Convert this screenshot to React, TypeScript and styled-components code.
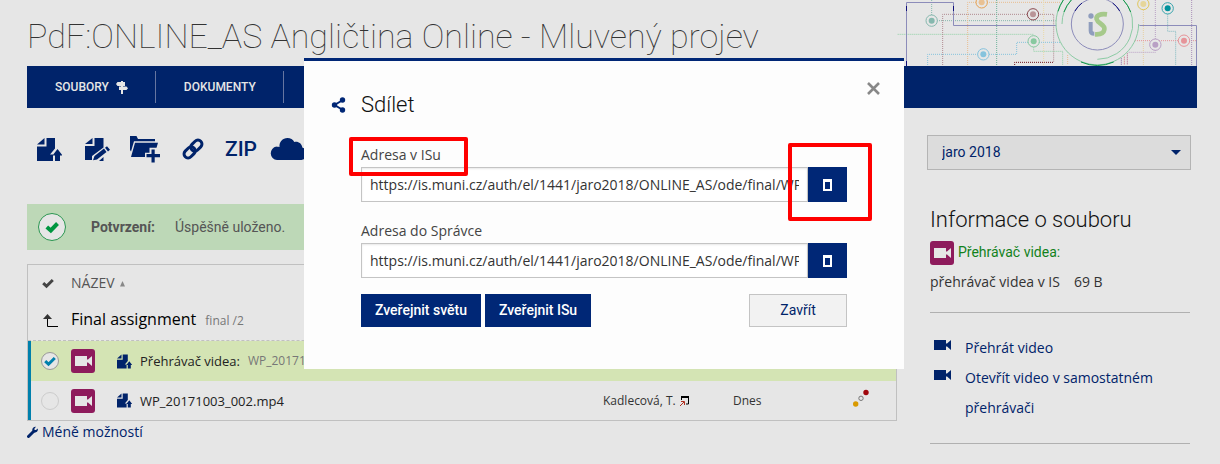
import React, { useState } from "react";
import styled, { createGlobalStyle } from "styled-components";

const navy = "#00236a";
const blue = "#002776";
const sans = `"Open Sans", "Noto Sans", sans-serif`;
const roboto = `Roboto, "Open Sans", sans-serif`;

const GlobalStyle = createGlobalStyle`
  *, *::before, *::after { box-sizing: border-box; }
  body { margin: 0; background: #e6e6e6; color: #333; font: 14px/20px ${sans}; }
  button, input, select { font: inherit; color: inherit; margin: 0; }
  button { cursor: pointer; }
  a { color: ${navy}; text-decoration: none; }
`;

const Page = styled.div`
  padding: 0 23px 20px 27px;
`;

const Header = styled.header`
  display: flex;
  justify-content: space-between;
  align-items: flex-start;
  height: 66px;
  overflow: hidden;
`;

const PageTitle = styled.h1`
  margin: 16px 0 0;
  font: 100 34px/40px ${roboto};
  white-space: nowrap;
`;

const Circuit = styled.svg`
  flex: none;
  width: 300px;
  height: 66px;
`;

const Nav = styled.nav`
  display: flex;
  align-items: center;
  height: 42px;
  background: ${navy};
`;

const NavLink = styled.a`
  display: flex;
  align-items: center;
  gap: 7px;
  height: 32px;
  padding: 0 27px 0 28px;
  border-right: 1px solid #6675a0;
  color: #e6e6e6;
  font: 500 12px/32px ${roboto};
`;

const Columns = styled.div`
  display: grid;
  grid-template-columns: minmax(0, 1fr) 264px;
  gap: 30px;
  padding: 27px 6px 0 0;
`;

const Toolbar = styled.div`
  display: flex;
  gap: 4px;
  height: 28px;
  margin-bottom: 41px;
`;

const ToolButton = styled.button`
  display: flex;
  align-items: center;
  justify-content: center;
  width: 44px;
  padding: 0;
  border: 0;
  background: none;
  color: ${navy};
  font: 500 21px/28px ${roboto};
`;

const Alert = styled.div`
  display: flex;
  align-items: center;
  height: 46px;
  padding-left: 11px;
  margin-bottom: 14px;
  background: #bdd8b7;
  color: #555;
  font: 400 14px/20px ${roboto};

  svg { margin-right: 25px; }
  strong { margin-right: 20px; font-weight: 700; }
`;

const FileTable = styled.table`
  width: 100%;
  table-layout: fixed;
  border: 1px solid #c0c0c0;
  border-spacing: 0;
`;

const Col = styled.col<{ $w?: number }>`
  width: ${(p) => (p.$w ? p.$w + "px" : "auto")};
`;

const HeadCell = styled.th`
  height: 37px;
  padding: 0 0 2px;
  color: #555;
  font-weight: 400;
  text-align: left;

  svg { vertical-align: middle; }
`;

const FolderCell = styled.td`
  height: 39px;
  padding: 0 0 2px;
  border-bottom: 1px dashed #c0c0c0;
  color: #000;
  font-size: 16px;
  font-weight: 500;

  small { margin-left: 5px; color: #777; font-size: 12px; font-weight: 400; }
  svg { vertical-align: middle; }
`;

const CheckIconSlot = styled.span<{ $left: number }>`
  display: flex;
  padding-left: ${(p) => p.$left}px;
`;

const FileRow = styled.tr<{ $selected?: boolean }>`
  background: ${(p) => (p.$selected ? "#d4e4b4" : "none")};

  td { height: ${(p) => (p.$selected ? 40 : 39)}px; padding: 0; font-size: 12px; }
  td:first-child { border-left: 3px solid #0080ac; }
`;

const FileName = styled.span`
  display: flex;
  align-items: center;
  gap: 8px;
  color: #222;
  font-size: 13px;
  white-space: nowrap;

  span { color: #777; font-size: 12px; }
`;

const CheckLabel = styled.label`
  display: grid;
  width: 18px;
  height: 18px;
  margin-left: 10px;
  place-items: center;

  > * { grid-area: 1 / 1; }
  svg { pointer-events: none; }
`;

const Check = styled.input`
  appearance: none;
  width: 18px;
  height: 18px;
  border: 1px solid #ccc;
  border-radius: 9px;
  background: #e6e6e6;

  &:checked { border-color: #999; }
  &:not(:checked) + svg { visibility: hidden; }
`;

const VideoBadge = styled.span`
  display: inline-flex;
  align-items: center;
  justify-content: center;
  width: 24px;
  height: 24px;
  border-radius: 3px;
  background: #8e1b5c;
  color: #e6e6e6;
  vertical-align: middle;
`;

const Author = styled.span`
  display: flex;
  align-items: center;
  gap: 4px;
  white-space: nowrap;
`;

const OptionsLink = styled.a`
  display: flex;
  align-items: center;
  gap: 4px;
  line-height: 22px;
`;

const SelectBox = styled.div`
  position: relative;
  height: 35px;

  svg { position: absolute; right: 10px; top: 15px; pointer-events: none; }
`;

const Select = styled.select`
  appearance: none;
  width: 100%;
  height: 35px;
  padding: 0 14px 2px;
  border: 1px solid #b4b4b4;
  border-radius: 0;
  background: #dcdcdc;
  color: ${navy};
  font-family: ${roboto};
`;

const Info = styled.section`
  padding: 35px 1px 0 3px;

  h2 { margin: 0 0 6px; color: #111; font: 300 22px/30px ${roboto}; }
  hr { height: 1px; margin: 0; border: 0; background: #b0b0b0; }
`;

const Kind = styled.p`
  display: flex;
  gap: 4px;
  margin: 0 0 7px;
  color: #12821c;
  font: 400 14px/22px ${roboto};
`;

const Meta = styled.p`
  display: flex;
  gap: 14px;
  margin: 0 0 20px;
`;

const Actions = styled.ul`
  margin: 0;
  padding: 20px 0;
  list-style: none;
  line-height: 30px;

  a { display: flex; gap: 14px; padding-left: 4px; }
  svg { flex: none; margin-top: 6px; }
`;

const Overlay = styled.div`
  position: absolute;
  inset: 58px 12px auto 0;
  display: flex;
  justify-content: center;
`;

const Dialog = styled.div`
  position: relative;
  width: 600px;
  max-width: 100%;
  padding: 29px 57px 42px;
  border-top: 3px solid ${blue};
  background: #fdfdfd;
`;

const DialogTitle = styled.h2`
  display: flex;
  align-items: center;
  gap: 15px;
  margin: 0 0 23px -30px;
  color: #111;
  font: 300 22px/30px ${roboto};
`;

const Close = styled.button`
  position: absolute;
  top: 17px;
  right: 20px;
  display: flex;
  padding: 4px;
  border: 0;
  background: none;
`;

const Field = styled.div`
  margin-bottom: 17px;

  &:last-of-type { margin-bottom: 16px; }
`;

const Marked = styled.span`
  position: relative;
  display: inline-block;
`;

const Frame = styled.span<{ $inset: string }>`
  position: absolute;
  z-index: 1;
  inset: ${(p) => p.$inset};
  border: 4px solid #f00;
  border-radius: 2px;
  pointer-events: none;
`;

const FieldLabel = styled.label`
  display: block;
  color: #444;
  line-height: 24px;
`;

const CopyRow = styled.div`
  display: flex;
  height: 35px;
`;

const Address = styled.input`
  flex: 1;
  min-width: 0;
  padding: 0 8px;
  border: 1px solid #c4c4c4;
  border-radius: 0;
  background: #fff;
  color: #333;
  box-shadow: inset 0 1px 2px #e8e8e8;
`;

const CopyButton = styled.button`
  display: flex;
  align-items: center;
  justify-content: center;
  width: 39px;
  height: 35px;
  padding: 0;
  border: 0;
  background: ${blue};
`;

const Buttons = styled.footer`
  display: flex;
  gap: 4px;
`;

const Button = styled.button<{ $plain?: boolean }>`
  height: 33px;
  min-width: ${(p) => (p.$plain ? "98px" : "0")};
  margin-left: ${(p) => (p.$plain ? "auto" : "0")};
  padding: 0 13px 2px;
  border: 1px solid ${(p) => (p.$plain ? "#c4c4c4" : blue)};
  background: ${(p) => (p.$plain ? "#f2f2f2" : blue)};
  color: ${(p) => (p.$plain ? navy : "#fff")};
  font: ${(p) => (p.$plain ? 400 : 500)} 14px/20px ${roboto};
`;

const Tick = ({ color, size = 12 }: { color: string; size?: number }) => (
  <svg width={size} height={size} viewBox="0 0 12 12" aria-hidden="true">
    <path d="M1.2 6.2 4.5 9.2 10.8 3" fill="none" stroke={color} strokeWidth="3" />
  </svg>
);

const Camera = ({ size = 17 }: { size?: number }) => (
  <svg width={size} height={(size * 12) / 17} viewBox="0 0 17 12" fill="currentColor" aria-hidden="true">
    <path d="M0 1h12v3.5h1L17 1v10l-4-3.5h-1V11H0z" />
  </svg>
);

const FileUpload = ({ size = 25 }: { size?: number }) => (
  <svg width={size} height={size} viewBox="0 0 25 25" fill={navy} aria-hidden="true">
    <path d="M0 7.5 7.5 1v6.5z" />
    <path d="M9.5 1H18v10.5l-5 6h3V24H0V9.5h9.5z" />
    <path d="m20.5 12 5 6.5h-2.5V24h-5v-5.5h-2.5z" />
  </svg>
);

const FileEdit = () => (
  <svg width="25" height="25" viewBox="0 0 25 25" fill={navy} aria-hidden="true">
    <path d="M0 7 7.5 1v6z" />
    <path d="M9.5 1H18.5v9.5L7 19v4H0V9h9.5z" />
    <path d="m9.500 19 9.500-7.500 2.500 3.500-9.500 7.500-4 .8zM20 10.800l2-1.600 3 3.600-2 1.700zM14 24l4.500-4v4z" />
  </svg>
);

const FolderAdd = () => (
  <svg width="30" height="28" viewBox="0 0 30 28" fill={navy} aria-hidden="true">
    <path d="M0 1h6.500l1.500 3H25v2.300H4L1 16.500 0 15z" />
    <path d="M5 7.800H28l-1.500 5h-7v5H15V22H1z" />
    <path d="M21.500 14.500h3.200V19H30v3.200h-5.300V27.500h-3.200v-5.300h-5V19h5z" />
  </svg>
);

const Chain = () => (
  <svg width="22" height="22" viewBox="0 0 22 22" fill="none" stroke={navy} strokeWidth="3" aria-hidden="true">
    <g transform="rotate(-45 11 11)">
      <rect x="0" y="7" width="12.500" height="8" rx="4" />
      <rect x="9.500" y="7" width="12.500" height="8" rx="4" />
    </g>
  </svg>
);

const Cloud = () => (
  <svg width="40" height="24" viewBox="0 0 38 24" fill={navy} aria-hidden="true">
    <path d="M7 23a6.800 6.800 0 0 1-.5-13.500C6.500 10 8 9.500 9.500 10 9 5 12.500 1 17.500 1c3 0 5.500 1.500 6.800 4 3.700-1 7.700 1.500 8 5.500A6.400 6.400 0 0 1 31.500 23z" />
  </svg>
);

const Signpost = () => (
  <svg width="12" height="13" viewBox="0 0 12 13" fill="#e6e6e6" aria-hidden="true">
    <path d="M5 0h2v1h2v4H7v.5h3.500L12 7.300 10.500 9H7v4H5V9H3V5.500h2V5H1.500L0 3l1.500-2H5z" />
  </svg>
);

const Dots = () => (
  <svg width="17" height="18" viewBox="0 0 17 18" aria-hidden="true">
    <circle cx="2.700" cy="15" r="2.700" fill="#d99a00" />
    <circle cx="8" cy="9.300" r="2.200" fill="none" stroke="#777" />
    <circle cx="13" cy="3.500" r="2.700" fill="#a0060c" />
  </svg>
);

const nodes: [number, number, string, string][] = [
  [125, 62, "#86b8ae", "#86b8ae"],
  [275, 7, "#e9c193", "#e5a050"],
  [429, 43, "#b99497", "#8a4a50"],
  [431, 124, "#88c9a0", "#88c9a0"],
  [280, 163, "#86c3dd", "#86c3dd"],
  [760, 12, "#e6d69a", "#e0c65c"],
  [833, 25, "#00929c", "#38a5ad"],
  [796, 134, "#b9a0c5", "#b9a0c5"],
  [882, 122, "#e69499", "#e69499"],
];

const traces: [string, string][] = [
  ["M19 175V103H431", "#8ed0a4"],
  ["M125 0V62H497", "#86b8ae"],
  ["M158 195V43H491V187", "#b08a90"],
  ["M374 195V187H491", "#6a1018"],
  ["M233 195V7H510", "#e9bd90"],
  ["M320 0V195", "#6fb39c"],
  ["M461 0V195", "#ead9a8"],
  ["M113 195V163H380V127H510", "#86c3dd"],
  ["M431 124V154H518V195", "#8ed0a4"],
  ["M533 165V195", "#e9bd90"],
  ["M760 0V195", "#e6cfa0"],
  ["M796 0V157H715", "#b9a0c5"],
  ["M833 25V94H857V195", "#7fb8c0"],
  ["M735 122H918", "#e69499"],
  ["M905 0V195", "#a98fb8"],
  ["M694 175V195", "#8a5a9a"],
  ["M703 170V195", "#d06070"],
  ["M712 160V195", "#b05a80"],
];

const CircuitArt = () => (
  <Circuit viewBox="21 0 900 198" fill="none" strokeWidth="3" role="img" aria-label="IS">
    {traces.map(([d, c]) => (
      <path key={d} d={d} stroke={c} strokeDasharray="3 3" />
    ))}
    <path d="M49.500 198V7.500H190.500V76.500H500M748 76.500H919.500V198" stroke="#8c8cba" />
    <path d="M49.500 18V33M190.500 18V33M49.500 183V198" stroke="#10107c" />
    {nodes.map(([x, y, fill, ring]) => (
      <g key={`${x}-${y}`}>
        <circle cx={x} cy={y} r="17" fill="#e6e6e6" stroke={ring} />
        <circle cx={x} cy={y} r="9" fill={fill} />
      </g>
    ))}
    <circle cx="622" cy="72" r="124" fill="#e6e6e6" />
    <path d="M520 0A124 124 0 1 0 746 72" stroke="#8ccba4" />
    <path d="M573 186A124 124 0 0 0 671 186M504 34A124 124 0 0 1 520 0" stroke="#12964a" />
    <path d="M516 72A106 106 0 0 1 544 0M700 0A106 106 0 0 1 622 178" stroke="#8ccba4" />
    <path d="M522 36A106 106 0 0 1 544 0M722 36A106 106 0 0 0 700 0" stroke="#12964a" />
    <circle cx="622" cy="72" r="78" stroke="#8c8cba" />
    <path d="M555 33A78 78 0 0 1 576 9M689 33A78 78 0 0 0 668 9" stroke="#10107c" />
    <circle cx="603" cy="48" r="8" fill="#8f9dbd" />
    <path d="M602 66V92Q602 101 613 101" stroke="#8f9dbd" strokeWidth="12" />
    <path d="M651 43C630 40 617 47 620 58C623 71 646 72 643 89C641 102 630 104 615 103" stroke="#a6c98b" strokeWidth="14" />
  </Circuit>
);

const address = "https://is.muni.cz/auth/el/1441/jaro2018/ONLINE_AS/ode/final/WP_20171003_002.mp4";

const AddressField = ({ id, label, marked }: { id: string; label: string; marked?: boolean }) => (
  <Field>
    <Marked>
      <FieldLabel htmlFor={id}>{label}</FieldLabel>
      {marked && <Frame $inset="-6px -27px -9px -12px" />}
    </Marked>
    <CopyRow>
      <Address id={id} defaultValue={address} readOnly />
      <Marked>
        <CopyButton type="button" aria-label="Kopírovat">
          <svg width="9" height="12" viewBox="0 0 9 12" aria-hidden="true">
            <path d="M0 0h9v12H0zM2 3v7h5V3z" fill="#fff" fillRule="evenodd" />
          </svg>
        </CopyButton>
        {marked && <Frame $inset="-24px -25px -19px -20px" />}
      </Marked>
    </CopyRow>
  </Field>
);

const ShareDialog = ({ onClose }: { onClose: () => void }) => (
  <Overlay>
    <Dialog role="dialog" aria-labelledby="share-title">
      <Close type="button" aria-label="Zavřít okno" onClick={onClose}>
        <svg width="13" height="13" viewBox="0 0 13 13" aria-hidden="true">
          <path d="m1 1 11 11M12 1 1 12" stroke="#888" strokeWidth="2.600" />
        </svg>
      </Close>
      <DialogTitle id="share-title">
        <svg width="15" height="16" viewBox="0 0 15 16" fill={blue} aria-hidden="true">
          <path d="M12 3 3.500 8l8.500 5" fill="none" stroke={blue} strokeWidth="2" />
          <circle cx="11.500" cy="3" r="2.700" />
          <circle cx="3.500" cy="8" r="2.700" />
          <circle cx="11.500" cy="13" r="2.700" />
        </svg>
        Sdílet
      </DialogTitle>
      <AddressField id="is-address" label="Adresa v ISu" marked />
      <AddressField id="manager-address" label="Adresa do Správce" />
      <Buttons>
        <Button type="button">Zveřejnit světu</Button>
        <Button type="button">Zveřejnit ISu</Button>
        <Button type="button" $plain onClick={onClose}>Zavřít</Button>
      </Buttons>
    </Dialog>
  </Overlay>
);

const FileEntry = ({ name, detail, selected }: { name: string; detail?: string; selected?: boolean }) => (
  <FileRow $selected={selected}>
    <td>
      <CheckLabel>
        <Check type="checkbox" defaultChecked={selected} aria-label={name} />
        <Tick color="#0080ac" />
      </CheckLabel>
    </td>
    <td><VideoBadge><Camera /></VideoBadge></td>
    <td>
      <FileName>
        <FileUpload size={15} />
        {name}
        {detail && <span>{detail}</span>}
      </FileName>
    </td>
    <td>
      <Author>
        Kadlecová, T.
        <svg width="10" height="10" viewBox="0 0 10 10" fill="none" aria-hidden="true">
          <path d="M1.500 4V1.500h7V8H6" stroke="#000" />
          <path d="M1 1h8" stroke="#000" strokeWidth="2" />
          <path d="M0 10 4 6M1 5.500h3.500V9" stroke="#b03020" />
        </svg>
      </Author>
    </td>
    <td>Dnes</td>
    <td><Dots /></td>
  </FileRow>
);

export default function App() {
  const [open, setOpen] = useState(true);
  return (
    <>
      <GlobalStyle />
      <Page>
        <Header>
          <PageTitle>PdF:ONLINE_AS Angličtina Online - Mluvený projev</PageTitle>
          <CircuitArt />
        </Header>
        <Nav>
          <NavLink href="#soubory">SOUBORY <Signpost /></NavLink>
          <NavLink href="#dokumenty">DOKUMENTY</NavLink>
        </Nav>
        <Columns>
          <main>
            <Toolbar>
              <ToolButton type="button" aria-label="Nahrát soubor"><FileUpload /></ToolButton>
              <ToolButton type="button" aria-label="Upravit soubor"><FileEdit /></ToolButton>
              <ToolButton type="button" aria-label="Nová složka"><FolderAdd /></ToolButton>
              <ToolButton type="button" aria-label="Sdílet" onClick={() => setOpen(true)}><Chain /></ToolButton>
              <ToolButton type="button">ZIP</ToolButton>
              <ToolButton type="button" aria-label="Cloud"><Cloud /></ToolButton>
            </Toolbar>
            <Alert role="status">
              <svg width="28" height="28" viewBox="0 0 28 28" aria-hidden="true">
                <circle cx="14" cy="14" r="13.500" fill="#e6e6e6" stroke="#2a9650" />
                <path d="m8.800 14 4 3.500L19.500 10.500" fill="none" stroke="#009640" strokeWidth="4" />
              </svg>
              <strong>Potvrzení:</strong>
              <span>Úspěšně uloženo.</span>
            </Alert>
            <FileTable>
              <colgroup>
                <Col $w={43} />
                <Col $w={46} />
                <Col />
                <Col $w={130} />
                <Col $w={120} />
                <Col $w={43} />
              </colgroup>
              <thead>
                <tr>
                  <HeadCell><CheckIconSlot $left={14}><Tick color="#444" /></CheckIconSlot></HeadCell>
                  <HeadCell colSpan={5}>
                    NÁZEV{" "}
                    <svg width="9" height="6" viewBox="0 0 9 6" aria-hidden="true"><path d="M2 5.500 4.500 0 7 5.500z" fill="#888" /></svg>
                  </HeadCell>
                </tr>
              </thead>
              <tbody>
                <tr>
                  <FolderCell>
                    <CheckIconSlot $left={15}>
                      <svg width="15" height="14" viewBox="0 0 15 14" aria-hidden="true">
                        <path d="M4.500 3v10.500H15" fill="none" stroke="#000" />
                        <path d="M0 6 4.500 1 9 6z" fill="#333" />
                      </svg>
                    </CheckIconSlot>
                  </FolderCell>
                  <FolderCell colSpan={5}>Final assignment <small>final /2</small></FolderCell>
                </tr>
                <FileEntry name="Přehrávač videa:" detail="WP_20171003_002.mp4" selected />
                <FileEntry name="WP_20171003_002.mp4" />
              </tbody>
            </FileTable>
            <OptionsLink href="#moznosti">
              <svg width="11" height="12" viewBox="0 0 11 12" aria-hidden="true">
                <path d="M1.500 10.500 6 6" stroke={navy} strokeWidth="3" strokeLinecap="round" />
                <path d="M9 .800 7.500 2.500v1.500H9l1.700-1.500C11.500 5 9.500 7.200 6.500 6.500 4 4.500 5.500.500 9 .800z" fill={navy} />
              </svg>
              Méně možností
            </OptionsLink>
          </main>
          <aside>
            <SelectBox>
              <Select aria-label="Období" defaultValue="jaro 2018">
                <option>jaro 2018</option>
              </Select>
              <svg width="10" height="5" viewBox="0 0 10 5" aria-hidden="true"><path d="M0 0h10L5 5z" fill={navy} /></svg>
            </SelectBox>
            <Info>
              <h2>Informace o souboru</h2>
              <Kind><VideoBadge><Camera /></VideoBadge>Přehrávač videa:</Kind>
              <Meta><span>přehrávač videa v IS</span><span>69 B</span></Meta>
              <hr />
              <Actions>
                <li><a href="#prehrat"><Camera /><span>Přehrát video</span></a></li>
                <li><a href="#otevrit"><Camera /><span>Otevřít video v samostatném přehrávači</span></a></li>
              </Actions>
              <hr />
            </Info>
          </aside>
        </Columns>
      </Page>
      {open && <ShareDialog onClose={() => setOpen(false)} />}
    </>
  );
}
